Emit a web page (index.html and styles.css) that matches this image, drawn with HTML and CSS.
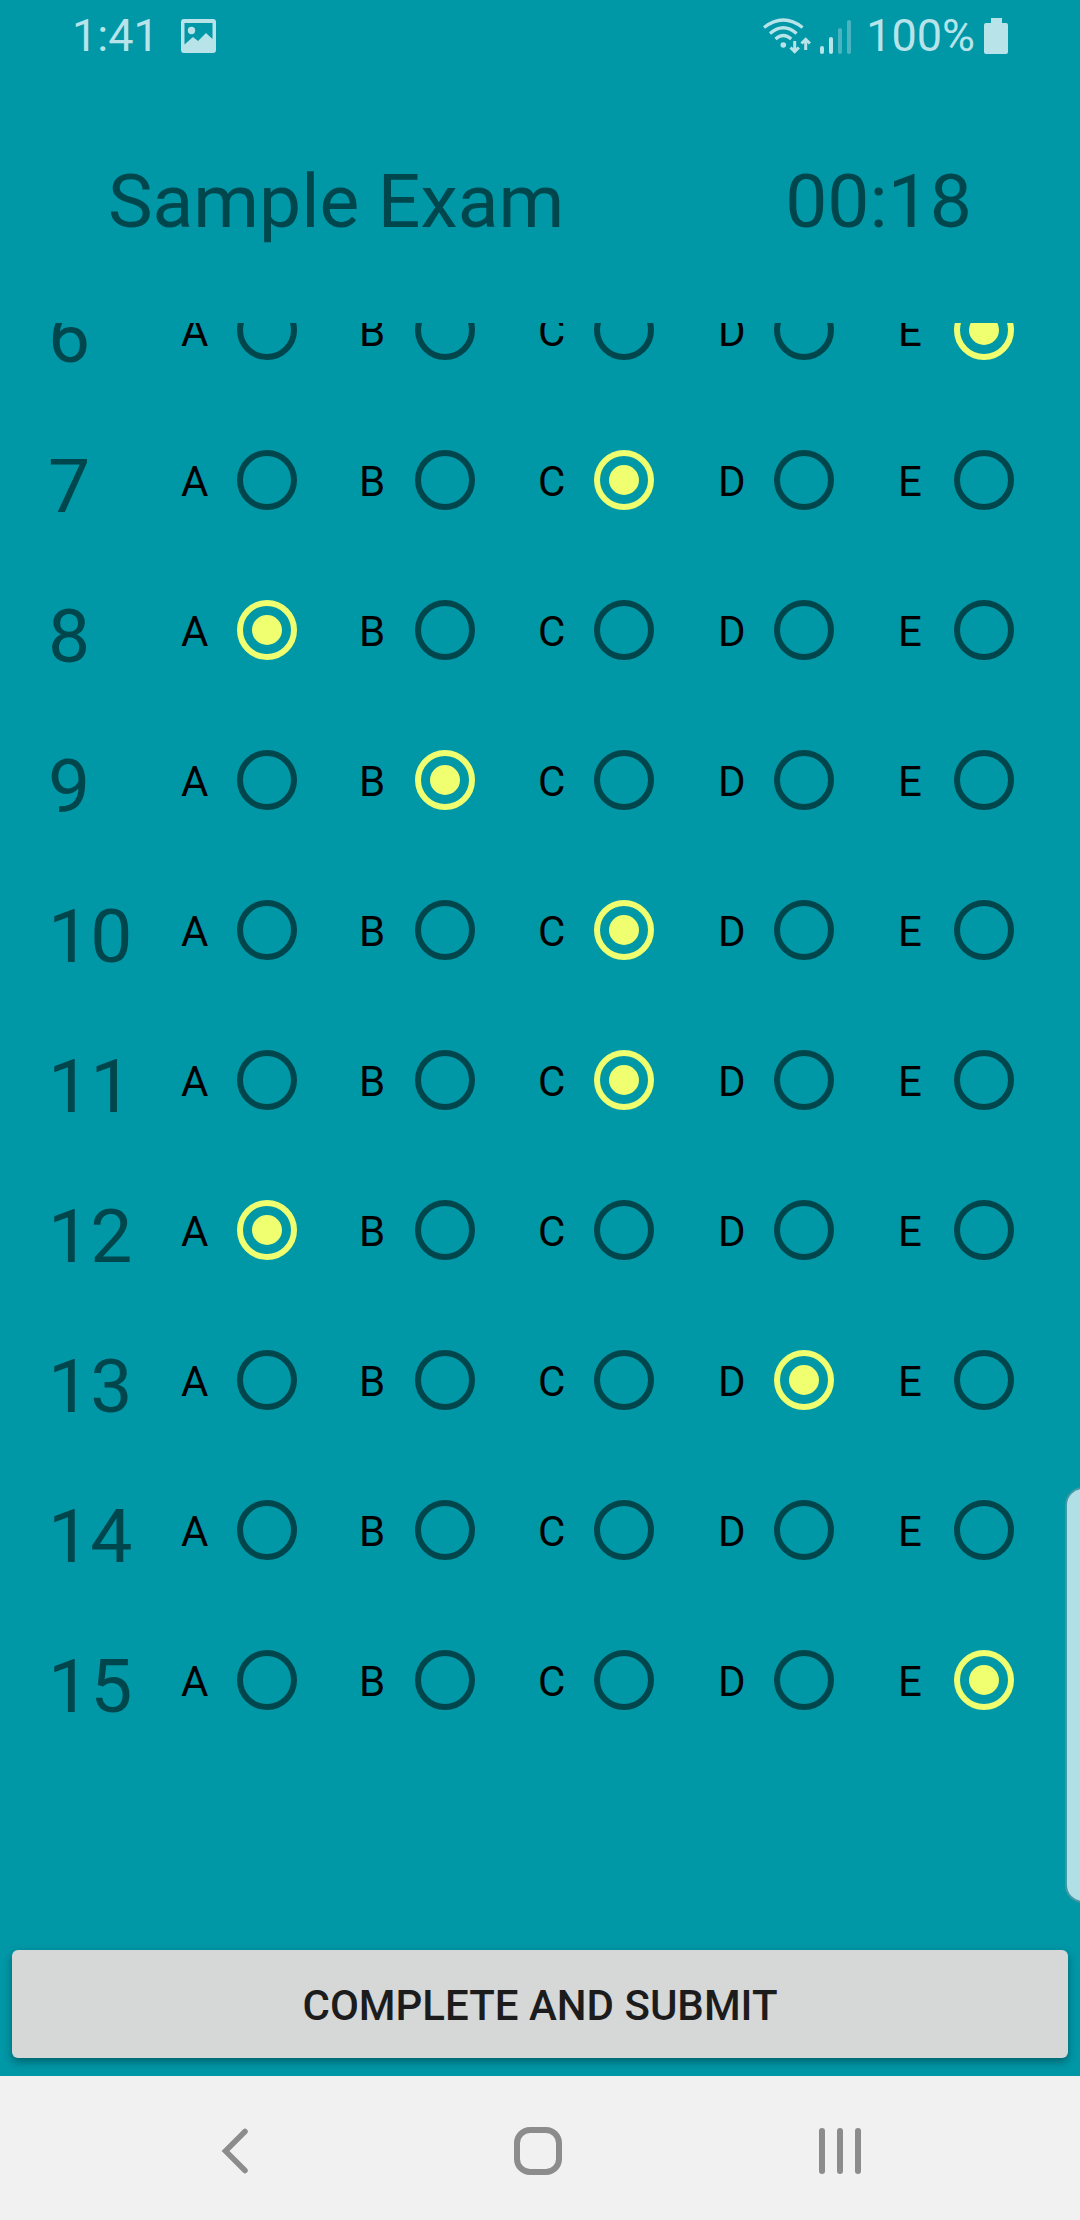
FILE: index.html
```html
<!DOCTYPE html>
<html lang="en">
<head>
<meta charset="utf-8">
<meta name="viewport" content="width=device-width, initial-scale=1">
<title>Sample Exam</title>
<link rel="stylesheet" href="styles.css">
</head>
<body>
<div class="app">
  <div class="status-bar">
    <div class="status-group status-left">
      <span>1:41</span>
      <svg class="icon" width="35" height="34" viewBox="0 0 35 34" aria-hidden="true"><path fill="currentColor" fill-rule="evenodd" d="M3 0h29a3 3 0 0 1 3 3v28a3 3 0 0 1-3 3H3a3 3 0 0 1-3-3V3a3 3 0 0 1 3-3zM3.500 4v21.500l8.500-7.500 5 4 8-8 6.500 6V4z"/><circle cx="10.500" cy="11.500" r="3.700" fill="currentColor"/></svg>
    </div>
    <div class="status-group status-right">
      <svg class="icon" width="48" height="36" viewBox="0 0 48 36" aria-hidden="true"><g fill="none" stroke="currentColor" stroke-width="3.200"><path d="M1 9.500Q20.300-5.500 39.600 9.500"/><path d="M7 15.500Q20.300 4 33.600 15.500"/><path d="M12.500 21Q20.300 14 28.200 21"/></g><circle cx="20.300" cy="27" r="2.800" fill="currentColor"/><g fill="none" stroke="currentColor" stroke-width="3"><path d="M31.700 23v11M27.500 29.500l4.200 4.200 4.200-4.200"/><path d="M42.700 32V21M38.500 25.500l4.200-4.200 4.200 4.200"/></g></svg>
      <svg class="icon signal" width="31" height="36" viewBox="0 0 31 36" aria-hidden="true"><g fill="currentColor"><rect x="0" y="28" width="4" height="8" rx="2"/><rect x="9" y="19" width="4" height="17" rx="2"/><g opacity=".4"><rect x="18" y="10" width="4" height="26" rx="2"/><rect x="27" y="2" width="4" height="34" rx="2"/></g></g></svg>
      <span>100%</span>
      <svg class="icon battery" width="24" height="36" viewBox="0 0 24 36" aria-hidden="true"><path fill="currentColor" d="M7 0h11v5h4a2 2 0 0 1 2 2v27a2 2 0 0 1-2 2H2a2 2 0 0 1-2-2V7a2 2 0 0 1 2-2h5z"/></svg>
    </div>
  </div>

  <header class="exam-header">
    <h1 class="exam-text">Sample Exam</h1>
    <time class="exam-text">00:18</time>
  </header>

  <main class="answers">
    <form class="answer-list" id="exam">
      <div class="row" role="radiogroup" aria-labelledby="n6"><span class="number" id="n6">6</span><label class="option">A<input type="radio" name="q6"></label><label class="option">B<input type="radio" name="q6"></label><label class="option">C<input type="radio" name="q6"></label><label class="option">D<input type="radio" name="q6"></label><label class="option">E<input type="radio" name="q6" checked></label></div>
      <div class="row" role="radiogroup" aria-labelledby="n7"><span class="number" id="n7">7</span><label class="option">A<input type="radio" name="q7"></label><label class="option">B<input type="radio" name="q7"></label><label class="option">C<input type="radio" name="q7" checked></label><label class="option">D<input type="radio" name="q7"></label><label class="option">E<input type="radio" name="q7"></label></div>
      <div class="row" role="radiogroup" aria-labelledby="n8"><span class="number" id="n8">8</span><label class="option">A<input type="radio" name="q8" checked></label><label class="option">B<input type="radio" name="q8"></label><label class="option">C<input type="radio" name="q8"></label><label class="option">D<input type="radio" name="q8"></label><label class="option">E<input type="radio" name="q8"></label></div>
      <div class="row" role="radiogroup" aria-labelledby="n9"><span class="number" id="n9">9</span><label class="option">A<input type="radio" name="q9"></label><label class="option">B<input type="radio" name="q9" checked></label><label class="option">C<input type="radio" name="q9"></label><label class="option">D<input type="radio" name="q9"></label><label class="option">E<input type="radio" name="q9"></label></div>
      <div class="row" role="radiogroup" aria-labelledby="n10"><span class="number" id="n10">10</span><label class="option">A<input type="radio" name="q10"></label><label class="option">B<input type="radio" name="q10"></label><label class="option">C<input type="radio" name="q10" checked></label><label class="option">D<input type="radio" name="q10"></label><label class="option">E<input type="radio" name="q10"></label></div>
      <div class="row" role="radiogroup" aria-labelledby="n11"><span class="number" id="n11">11</span><label class="option">A<input type="radio" name="q11"></label><label class="option">B<input type="radio" name="q11"></label><label class="option">C<input type="radio" name="q11" checked></label><label class="option">D<input type="radio" name="q11"></label><label class="option">E<input type="radio" name="q11"></label></div>
      <div class="row" role="radiogroup" aria-labelledby="n12"><span class="number" id="n12">12</span><label class="option">A<input type="radio" name="q12" checked></label><label class="option">B<input type="radio" name="q12"></label><label class="option">C<input type="radio" name="q12"></label><label class="option">D<input type="radio" name="q12"></label><label class="option">E<input type="radio" name="q12"></label></div>
      <div class="row" role="radiogroup" aria-labelledby="n13"><span class="number" id="n13">13</span><label class="option">A<input type="radio" name="q13"></label><label class="option">B<input type="radio" name="q13"></label><label class="option">C<input type="radio" name="q13"></label><label class="option">D<input type="radio" name="q13" checked></label><label class="option">E<input type="radio" name="q13"></label></div>
      <div class="row" role="radiogroup" aria-labelledby="n14"><span class="number" id="n14">14</span><label class="option">A<input type="radio" name="q14"></label><label class="option">B<input type="radio" name="q14"></label><label class="option">C<input type="radio" name="q14"></label><label class="option">D<input type="radio" name="q14"></label><label class="option">E<input type="radio" name="q14"></label></div>
      <div class="row" role="radiogroup" aria-labelledby="n15"><span class="number" id="n15">15</span><label class="option">A<input type="radio" name="q15"></label><label class="option">B<input type="radio" name="q15"></label><label class="option">C<input type="radio" name="q15"></label><label class="option">D<input type="radio" name="q15"></label><label class="option">E<input type="radio" name="q15" checked></label></div>
    </form>
  </main>

  <div class="submit-bar">
    <button class="submit" type="submit" form="exam">COMPLETE AND SUBMIT</button>
  </div>

  <nav class="nav-bar" aria-label="System navigation">
    <button class="nav-button" type="button" aria-label="Back"><svg class="icon" width="48" height="48" viewBox="0 0 48 48"><path fill="none" stroke="currentColor" stroke-width="5.500" stroke-linecap="round" d="M33 4.500 13.500 24 33 43.500"/></svg></button>
    <button class="nav-button" type="button" aria-label="Home"><svg class="icon" width="48" height="48" viewBox="0 0 48 48"><rect x="3" y="3" width="42" height="42" rx="13" fill="none" stroke="currentColor" stroke-width="6"/></svg></button>
    <button class="nav-button" type="button" aria-label="Recent apps"><svg class="icon" width="48" height="48" viewBox="0 0 48 48"><g fill="currentColor"><rect x="3" y="1" width="6" height="46" rx="3"/><rect x="21" y="1" width="6" height="46" rx="3"/><rect x="39" y="1" width="6" height="46" rx="3"/></g></svg></button>
  </nav>

  <div class="edge-handle"></div>
</div>
</body>
</html>
```
FILE: styles.css
```css
* {
  box-sizing: border-box;
}

body {
  margin: 0;
  background: #0097a7;
  color: #000;
  font-family: Roboto, "Liberation Sans", sans-serif;
}

.app {
  position: relative;
  display: flex;
  flex-direction: column;
  height: 100vh;
  overflow: hidden;
}

.icon {
  display: block;
  flex: none;
}

.status-bar {
  display: flex;
  justify-content: space-between;
  height: 72px;
  padding: 0 72px;
  color: #b8e4e9;
  font-size: 45px;
  line-height: 72px;
}

.status-group {
  display: flex;
  align-items: center;
}

.status-left {
  gap: 22px;
}

.status-right {
  gap: 9px;
}

.signal {
  margin-right: 6px;
}

.exam-header {
  display: flex;
  justify-content: space-between;
  padding: 85px 108px 78px;
}

.exam-text {
  margin: 0;
  color: #00464d;
  font-size: 75px;
  font-weight: 400;
  line-height: 88px;
}

.answers {
  flex: 1;
  min-height: 0;
  overflow: hidden;
}

/* The list rests scrolled part of the way through question 6. */
.answer-list {
  margin-top: -68px;
  padding: 0 3px 0 48px;
}

.row {
  display: grid;
  grid-template-columns: 133px 178fr 179fr 180fr 180fr 179fr;
  align-items: center;
  height: 150px;
}

.number {
  padding-top: 12px;
  color: #00464d;
  font-size: 75px;
  line-height: 88px;
}

.option {
  display: grid;
  grid-template-columns: 56px 60px;
  align-items: end;
  font-size: 42px;
  line-height: 56px;
}

.option input {
  appearance: none;
  width: 60px;
  height: 60px;
  margin: 0;
  border: 6px solid #00464d;
  border-radius: 50%;
}

.option input:checked {
  padding: 9px;
  border-color: #f0ff70;
  background: #f0ff70 content-box;
}

.submit-bar {
  padding: 12px 12px 18px;
}

.submit {
  display: block;
  width: 100%;
  height: 108px;
  padding: 4px 0 0;
  border: 0;
  border-radius: 6px;
  background: #d6d7d7;
  box-shadow: 0 4px 8px rgba(0, 0, 0, 0.35);
  color: #1c1c1c;
  font: 500 42px/104px Roboto, "Liberation Sans", sans-serif;
}

.nav-bar {
  display: flex;
  justify-content: center;
  gap: 254px;
  padding: 51px 4px 45px 0;
  background: #f1f1f1;
}

.nav-button {
  padding: 0;
  border: 0;
  background: none;
  color: #8c8c8c;
}

.edge-handle {
  position: absolute;
  top: 1487px;
  right: -6px;
  width: 21px;
  height: 416px;
  border: 2px solid #3f9aa5;
  border-radius: 18px 0 0 18px;
  background: #b2dfe5;
}
```
